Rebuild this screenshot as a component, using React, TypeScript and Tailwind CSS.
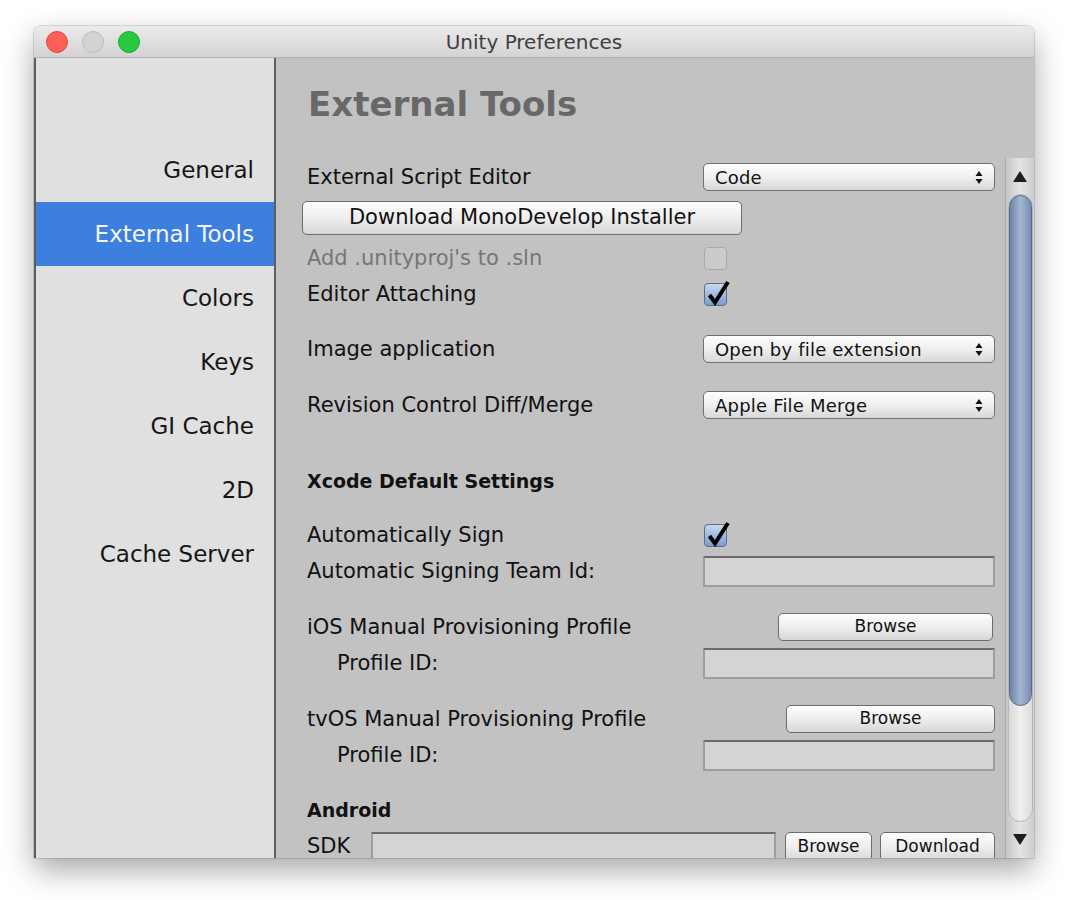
import React from 'react';

const font = { fontFamily: '"DejaVu Sans", "Liberation Sans", sans-serif' };

const Arrows = () => (
  <svg width="8" height="13" viewBox="0 0 8 13">
    <path d="M4 0 L7.5 5 L0.5 5 Z" fill="#111" />
    <path d="M4 13 L7.5 8 L0.5 8 Z" fill="#111" />
  </svg>
);

const Dropdown = ({ value }: { value: string }) => (
  <div className="flex h-[28px] w-[292px] items-center justify-between rounded-[5px] border border-[#6f6f6f] bg-gradient-to-b from-[#fefefe] via-[#efefef] to-[#d8d8d8] pl-[11px] pr-[11px] text-[18px] tracking-[0.2px] text-[#111]">
    <span>{value}</span>
    <Arrows />
  </div>
);

const Button = ({ label, className }: { label: string; className: string }) => (
  <div
    className={
      'flex shrink-0 items-center justify-center rounded-[5px] border border-[#6c6c6c] bg-gradient-to-b from-[#fdfdfd] via-[#eeeeee] to-[#d6d6d6] text-[#111] ' +
      className
    }
  >
    {label}
  </div>
);

const Field = ({ className = 'w-[292px]' }: { className?: string }) => (
  <div className={'h-[31px] shrink-0 border-2 border-[#9e9e9e] border-t-[#6b6b6b] bg-[#d4d4d4] ' + className} />
);

const Checkbox = ({ checked, disabled }: { checked?: boolean; disabled?: boolean }) => {
  if (disabled) {
    return <div className="ml-[1px] h-[23px] w-[23px] rounded-[4px] border border-[#a9a9a9] bg-[#cbcbcb]" />;
  }
  return (
    <div className="relative ml-[1px] h-[23px] w-[23px] rounded-[4px] border border-[#5e6b80] bg-gradient-to-b from-[#c9d8f0] to-[#7c9bd2]">
      {checked && (
        <svg className="absolute left-[1px] top-[-5px]" width="26" height="28" viewBox="0 0 26 28">
          <path d="M3.5 16 L9 23.5 L22 3" stroke="#000" strokeWidth="4" fill="none" strokeLinejoin="miter" />
        </svg>
      )}
    </div>
  );
};

const Row = ({
  label,
  className,
  labelClass = 'text-[#111]',
  children,
}: {
  label: string;
  className: string;
  labelClass?: string;
  children?: React.ReactNode;
}) => (
  <div className={'flex shrink-0 items-center ' + className}>
    <div className={'w-[396px] shrink-0 text-[21px] leading-none ' + labelClass}>{label}</div>
    {children}
  </div>
);

const ScrollBar = () => (
  <div className="flex w-[29px] shrink-0 flex-col items-center border-l border-[#a9a9a9] bg-gradient-to-r from-[#c6c6c6] via-[#e4e4e4] to-[#cdcdcd]">
    <div className="flex h-[36px] items-center justify-center">
      <svg width="14" height="11" viewBox="0 0 14 11">
        <path d="M7 0 L14 11 L0 11 Z" fill="#1e1e1e" />
      </svg>
    </div>
    <div className="flex h-[628px] w-[25px] flex-col rounded-full border border-[#b9b9b9] bg-gradient-to-r from-[#d9d9d9] via-[#f0f0f0] to-[#dcdcdc]">
      <div className="h-[511px] w-full rounded-full border border-[#56698c] bg-gradient-to-r from-[#6d83a9] via-[#a4b6d2] to-[#788db1]" />
    </div>
    <div className="flex flex-1 items-center justify-center pb-[2px]">
      <svg width="14" height="11" viewBox="0 0 14 11">
        <path d="M0 0 L14 0 L7 11 Z" fill="#1e1e1e" />
      </svg>
    </div>
  </div>
);

const sideItems = ['General', 'External Tools', 'Colors', 'Keys', 'GI Cache', '2D', 'Cache Server'];

export default function App() {
  return (
    <div className="h-[900px] w-[1068px] bg-white pl-[34px] pt-[26px]" style={font}>
      <div className="flex h-[832px] w-[1000px] flex-col overflow-hidden rounded-t-[7px] shadow-[0_12px_30px_rgba(0,0,0,0.35),0_0_0_1px_rgba(0,0,0,0.12)]">
        {/* title bar */}
        <div className="grid h-[32px] shrink-0 grid-cols-[1fr_auto_1fr] items-center border-b border-[#b1b1b1] bg-gradient-to-b from-[#ecebec] to-[#d4d2d4]">
          <div className="flex items-center gap-[14px] pl-[12px]">
            <div className="h-[22px] w-[22px] rounded-full border border-[#e0443e] bg-[#fe5f57]" />
            <div className="h-[22px] w-[22px] rounded-full border border-[#bcbcbc] bg-[#d3d3d3]" />
            <div className="h-[22px] w-[22px] rounded-full border border-[#1aab29] bg-[#28c940]" />
          </div>
          <div className="text-[20px] text-[#404040]">Unity Preferences</div>
          <div />
        </div>

        <div className="flex min-h-0 flex-1">
          {/* sidebar */}
          <div className="w-[242px] shrink-0 border-x-2 border-[#5e5e5e] bg-[#e0e0e0] pt-[80px]">
            {sideItems.map((item) => (
              <div
                key={item}
                className={
                  item === 'External Tools'
                    ? 'flex h-[64px] items-center justify-end bg-[#3d7fde] pr-[20px] text-[23px] text-[#f4f6fa]'
                    : 'flex h-[64px] items-center justify-end pr-[20px] text-[23px] text-[#151515]'
                }
              >
                {item}
              </div>
            ))}
          </div>

          {/* content */}
          <div className="flex min-w-0 flex-1 flex-col bg-[#c2c2c2]">
            <div className="h-[100px] shrink-0 pl-[32px] pt-[24px] text-[34px] font-bold leading-[44px] text-[#686868]">
              External Tools
            </div>
            <div className="flex min-h-0 flex-1">
              <div className="flex min-w-0 flex-1 flex-col overflow-hidden pl-[31px] pr-[10px]">
                <Row label="External Script Editor" className="mt-[1px] h-[36px]">
                  <Dropdown value="Code" />
                </Row>
                <Button
                  label="Download MonoDevelop Installer"
                  className="ml-[-5px] mt-[6px] h-[34px] w-[440px] text-[21px]"
                />
                <Row label="Add .unityproj's to .sln" labelClass="text-[#767676]" className="mt-[11px] h-[24px]">
                  <Checkbox disabled />
                </Row>
                <Row label="Editor Attaching" className="mt-[12px] h-[24px]">
                  <Checkbox checked />
                </Row>
                <Row label="Image application" className="mt-[29px] h-[28px]">
                  <Dropdown value="Open by file extension" />
                </Row>
                <Row label="Revision Control Diff/Merge" className="mt-[28px] h-[28px]">
                  <Dropdown value="Apple File Merge" />
                </Row>
                <div className="mt-[48px] flex h-[28px] shrink-0 items-center text-[19px] font-bold text-[#111]">
                  Xcode Default Settings
                </div>
                <Row label="Automatically Sign" className="mt-[28px] h-[24px]">
                  <Checkbox checked />
                </Row>
                <Row label="Automatic Signing Team Id:" className="mt-[9px] h-[31px]">
                  <Field />
                </Row>
                <Row label="iOS Manual Provisioning Profile" className="mt-[26px] h-[28px]">
                  <Button label="Browse" className="ml-[75px] h-[28px] w-[215px] text-[17px]" />
                </Row>
                <Row label="Profile ID:" labelClass="pl-[30px] text-[#111]" className="mt-[7px] h-[31px]">
                  <Field />
                </Row>
                <Row label="tvOS Manual Provisioning Profile" className="mt-[26px] h-[28px]">
                  <Button label="Browse" className="ml-[83px] h-[28px] w-[209px] text-[17px]" />
                </Row>
                <Row label="Profile ID:" labelClass="pl-[30px] text-[#111]" className="mt-[7px] h-[31px]">
                  <Field />
                </Row>
                <div className="mt-[25px] flex h-[28px] shrink-0 items-center text-[19px] font-bold text-[#111]">
                  Android
                </div>
                <div className="mt-[8px] flex h-[32px] shrink-0 items-start">
                  <div className="w-[64px] shrink-0 pt-[2px] text-[21px] leading-[24px] text-[#111]">SDK</div>
                  <Field className="h-[32px] w-[405px]" />
                  <Button label="Browse" className="ml-[9px] h-[30px] w-[87px] text-[17px]" />
                  <Button label="Download" className="ml-[8px] h-[30px] w-[115px] text-[17px]" />
                </div>
              </div>
              <ScrollBar />
            </div>
          </div>
        </div>
      </div>
    </div>
  );
}
